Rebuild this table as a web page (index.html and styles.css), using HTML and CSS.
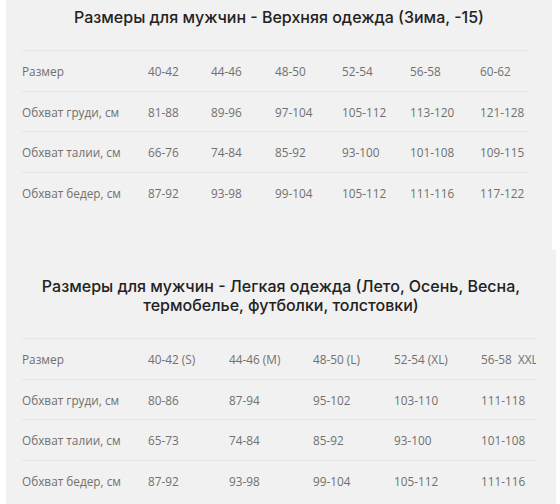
FILE: index.html
```html
<!DOCTYPE html>
<html lang="ru">
<head>
<meta charset="utf-8">
<link rel="stylesheet" href="styles.css">
</head>
<body>
<section class="card card-top">
  <h2 class="title">Размеры для мужчин - Верхняя одежда (Зима, -15)</h2>
  <div class="table t1">
    <div class="row"><span>Размер</span><span>40-42</span><span>44-46</span><span>48-50</span><span>52-54</span><span>56-58</span><span>60-62</span></div>
    <div class="row"><span>Обхват груди, см</span><span>81-88</span><span>89-96</span><span>97-104</span><span>105-112</span><span>113-120</span><span>121-128</span></div>
    <div class="row"><span>Обхват талии, см</span><span>66-76</span><span>74-84</span><span>85-92</span><span>93-100</span><span>101-108</span><span>109-115</span></div>
    <div class="row last"><span>Обхват бедер, см</span><span>87-92</span><span>93-98</span><span>99-104</span><span>105-112</span><span>111-116</span><span>117-122</span></div>
  </div>
</section>
<section class="card card-bottom">
  <h2 class="title title2">Размеры для мужчин - Легкая одежда (Лето, Осень, Весна,<br>термобелье, футболки, толстовки)</h2>
  <div class="table t2">
    <div class="row"><span>Размер</span><span>40-42 (S)</span><span>44-46 (M)</span><span>48-50 (L)</span><span>52-54 (XL)</span><span class="clip">56-58&nbsp;&nbsp;XXL</span></div>
    <div class="row"><span>Обхват груди, см</span><span>80-86</span><span>87-94</span><span>95-102</span><span>103-110</span><span>111-118</span></div>
    <div class="row"><span>Обхват талии, см</span><span>65-73</span><span>74-84</span><span>85-92</span><span>93-100</span><span>101-108</span></div>
    <div class="row"><span>Обхват бедер, см</span><span>87-92</span><span>93-98</span><span>99-104</span><span>105-112</span><span>111-116</span></div>
  </div>
</section>
</body>
</html>
```
FILE: styles.css
```css
html, body {
  margin: 0;
  padding: 0;
  background: #ffffff;
  width: 560px;
  height: 504px;
  overflow: hidden;
}
body {
  font-family: "Open Sans", "Liberation Sans", sans-serif;
  display: flex;
  flex-direction: column;
  align-items: flex-start;
}
.card {
  background: #f1f1f1;
  margin-left: 6px;
  box-sizing: border-box;
}
.card-top {
  width: 546px;
  height: 250px;
  padding-top: 6px;
}
.card-bottom {
  width: 550px;
  height: 254px;
  padding-top: 27px;
}
.title {
  margin: 0;
  font-family: Inter, "Open Sans", sans-serif;
  font-size: 16px;
  font-weight: 500;
  line-height: 22px;
  color: #222222;
  text-align: center;
}
.title2 {
  line-height: 19px;
}
.table {
  margin-left: 16px;
  width: 506px;
  font-size: 11.8px;
  color: #707070;
}
.t1 {
  margin-top: 22px;
}
.t2 {
  margin-top: 23px;
  width: 514px;
  overflow: hidden;
}
.row {
  display: grid;
  height: 40.5px;
  align-items: center;
  border-top: 1px solid #e6e6e6;
  box-sizing: border-box;
  white-space: nowrap;
}
.t1 .row {
  grid-template-columns: 126px 63px 64px 67px 68px 70px 48px;
}
.t2 .row {
  grid-template-columns: 126px 81px 84px 81px 87px 60px;
}
.row span {
  line-height: 16px;
  padding-top: 1px;
}
.clip {
  overflow: hidden;
}
```
